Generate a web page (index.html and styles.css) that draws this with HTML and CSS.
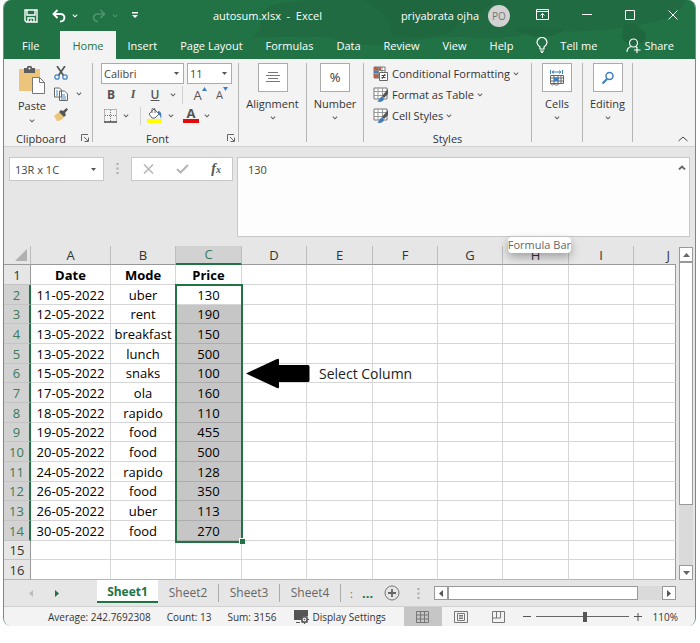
FILE: index.html
```
<!DOCTYPE html>
<html lang="en">

<head>
    <meta charset="UTF-8">
    <meta name="viewport" content="width=device-width, initial-scale=1.0">
    <title>autosum.xlsx - Excel</title>
    <link rel="stylesheet" href="styles.css">
</head>

<body>
    <svg class="defs" aria-hidden="true">
        <symbol id="chev" viewBox="0 0 6 6"><path d="M.8 1.6 3 3.8 5.2 1.6" fill="none" stroke="currentColor" stroke-width="1.1"/></symbol>
        <symbol id="launch" viewBox="0 0 8 8"><path d="M.5 7V.5H7M3 3l4 4M7.500 3.500v4h-4" fill="none" stroke="currentColor"/></symbol>
        <symbol id="dots" viewBox="0 0 3 11"><path d="M.5 0h2v2h-2zM.5 4.500h2v2h-2zM.5 9h2v2h-2z" fill="currentColor"/></symbol>
        <symbol id="brushgrid" viewBox="0 0 16 16">
            <path d="M1 1h13v11H1z" fill="#fff" stroke="#777"/>
            <path d="M1 4.500h13M1 8.500h13M5 1v11M9.500 1v11" stroke="#999" fill="none"/>
            <path d="M15 2v5l-4 4-2-2z" fill="#555"/>
            <path d="M4 14.500c2 0 2-4 5-5l2 2c0 3-4 4-7 3z" fill="#3f7fbf"/>
        </symbol>
    </svg>

    <div class="window">
        <header class="top">
            <svg class="art" viewBox="0 0 440 60" preserveAspectRatio="none" aria-hidden="true">
                <path d="M0 36c14-6 2-24 18-30 20-6 34-6 60-6h352c-4 20-30 22-60 28-40 6-70 2-104 8-36 6-60-2-96 4-30 6-60 8-84 2-10-6-20-4-40-4-20-2-30 2-46-2z" fill="#206b41"/>
                <path d="M110 0h130c-8 14-30 16-40 30-10 8-40 10-60 6-6-10 0-20-30-36zM260 30c20-6 30 4 50-2-10 14-36 10-50 2z" fill="#1f673f"/>
                <path d="M368 32c0-10 14-10 18-2 8 2 6 14-2 14-8 4-20-2-16-12z" fill="#1f673f"/>
            </svg>
            <div class="titlebar">
                <div class="quick">
                    <button aria-label="Save"><svg width="14" height="14" viewBox="0 0 14 14" fill="none" stroke="#fff" stroke-width="1.400"><path d="M1 1h12v12H2.500L1 11.500zM3 1v5h8V1M4 13V9h6v4M7 10.500v2"/></svg></button>
                    <button class="undo" aria-label="Undo"><svg width="14" height="14" viewBox="0 0 14 14" fill="none" stroke="#fff" stroke-width="1.900"><path d="M5.500 1 1.500 5l4 4M2 5h6.500c5.500 0 5 7.500-.5 7.500"/></svg><svg class="chev"><use href="#chev"/></svg></button>
                    <button class="redo" aria-label="Redo" disabled><svg width="14" height="14" viewBox="0 0 14 14" fill="none" stroke="currentColor" stroke-width="1.600"><path d="m8.500 1 4 4-4 4M12 5H5.500C0 5 .5 12.500 6 12.500"/></svg><svg class="chev"><use href="#chev"/></svg></button>
                    <button aria-label="Customize toolbar"><svg width="6" height="7" viewBox="0 0 6 7"><path d="M0 0h6v1.400H0zM0 3h6L3 6z" fill="#fff"/></svg></button>
                </div>
                <h1 class="title">autosum.xlsx&nbsp; -&nbsp; Excel</h1>
                <div class="account">priyabrata ojha <span class="avatar">PO</span></div>
                <div class="controls">
                    <button aria-label="Ribbon display options"><svg width="13" height="11" viewBox="0 0 13 11" fill="none" stroke="#fff"><path d="M.5.500h12v10H.5zM.5 2.500h12M6.500 9V4.500M4.500 6.500l2-2 2 2"/></svg></button>
                    <button aria-label="Minimize"><svg width="10" height="10" viewBox="0 0 10 10" stroke="#fff"><path d="M0 4.500h10"/></svg></button>
                    <button aria-label="Maximize"><svg width="10" height="10" viewBox="0 0 10 10" fill="none" stroke="#fff"><path d="M.5.500h9v9h-9z"/></svg></button>
                    <button aria-label="Close"><svg width="10" height="10" viewBox="0 0 10 10" stroke="#fff"><path d="m.5.500 9 9m0-9-9 9"/></svg></button>
                </div>
            </div>
            <nav class="menu">
                <a class="file" href="#">File</a>
                <a class="active" href="#">Home</a>
                <a href="#">Insert</a>
                <a href="#">Page Layout</a>
                <a href="#">Formulas</a>
                <a href="#">Data</a>
                <a href="#">Review</a>
                <a href="#">View</a>
                <a href="#">Help</a>
                <a class="tell" href="#"><svg width="12" height="16" viewBox="0 0 12 16" fill="none" stroke="#fff" stroke-width="1.200"><path d="M4 12v-2C2 8.500 1 7.500 1 5.500a5 5 0 0 1 10 0C11 7.500 10 8.500 8 10v2zM4 14h4M5 15.400h2"/></svg>Tell me</a>
                <a class="share" href="#"><svg width="15" height="15" viewBox="0 0 15 15" fill="none" stroke="#fff" stroke-width="1.200"><circle cx="7.500" cy="5" r="4"/><path d="M1 14c0-3 2-5 4.500-5.500M9.500 8.500l1.500 1M11 9v6M8 12h6.500"/></svg>Share</a>
            </nav>
        </header>

        <section class="ribbon">
            <div class="group clipboard">
                <div class="body">
                    <button class="paste">
                        <svg width="28" height="28" viewBox="0 0 28 28"><path d="M1 3h21v22H1z" fill="#ecc47c"/><path d="M6 2h3a2.500 2.500 0 0 1 5 0h3v5H6z" fill="#5d5d5d"/><circle cx="11.500" cy="2.500" r="1" fill="#fff"/><path d="M14.500 11.500h7l5 5v11h-12z" fill="#fff" stroke="#777"/><path d="M21.500 11.500v5h5" fill="none" stroke="#777"/></svg>
                        Paste
                        <svg class="chev"><use href="#chev"/></svg>
                    </button>
                    <div class="stack">
                        <button aria-label="Cut"><svg width="14" height="14" viewBox="0 0 14 14" fill="none"><path d="M3 0 9.500 9.500M11 0 4.500 9.500" stroke="#555" stroke-width="1.700"/><circle cx="3" cy="11" r="2.200" stroke="#4a86c5" stroke-width="1.300"/><circle cx="11" cy="11" r="2.200" stroke="#4a86c5" stroke-width="1.300"/></svg></button>
                        <button aria-label="Copy"><svg width="14" height="14" viewBox="0 0 14 14" fill="#fff" stroke="#666"><path d="M.5 1h5l2 2v7h-7zM5.500 4h5l3 3v6.500h-8z"/><path d="M2 4h2M2 6h2M2 8h2M7 8h4M7 10h5M7 12h5" stroke="#4a86c5"/></svg><svg class="chev"><use href="#chev"/></svg></button>
                        <button aria-label="Format Painter"><svg width="14" height="13" viewBox="0 0 14 13"><path d="m0 8 5-4 5 5c-2 3-5 4-7 4z" fill="#ecc47c"/><path d="m5 4 2-2 2 1 3.500-3L14 1.500l-3 3.500 1 2-2 2z" fill="#555"/></svg></button>
                    </div>
                </div>
                <div class="label">Clipboard <svg class="launch"><use href="#launch"/></svg></div>
            </div>

            <div class="group font">
                <div class="body">
                    <div class="line pickers">
                        <select class="face" aria-label="Font"><option>Calibri</option></select>
                        <select class="size" aria-label="Font size"><option>11</option></select>
                    </div>
                    <div class="line">
                        <button class="letter"><b>B</b></button>
                        <button class="letter serif"><i>I</i></button>
                        <button class="letter strong"><u>U</u></button>
                        <button class="drop" aria-label="Underline options"><svg class="chev"><use href="#chev"/></svg></button>
                        <span class="bar"></span>
                        <button class="grow" aria-label="Increase font size">A<svg width="5" height="4" viewBox="0 0 5 4"><path d="M0 4 2.500 0 5 4z" fill="#3f7fbf"/></svg></button>
                        <button class="grow small" aria-label="Decrease font size">A<svg width="5" height="4" viewBox="0 0 5 4"><path d="m0 0 2.500 4L5 0z" fill="#3f7fbf"/></svg></button>
                    </div>
                    <div class="line">
                        <button aria-label="Borders"><svg width="14" height="14" viewBox="0 0 14 14" fill="none" stroke="#777"><path d="M.5.500h12v12M.5.500v12M6.500 1v12M1 6.500h12" stroke-dasharray="1 1"/><path d="M0 13h13" stroke="#444" stroke-width="1.400"/></svg></button>
                        <button class="drop" aria-label="Border options"><svg class="chev"><use href="#chev"/></svg></button>
                        <span class="bar"></span>
                        <button aria-label="Fill color"><svg width="16" height="15" viewBox="0 0 16 15"><path d="m2 6 5-5 5 5-4 4H5z" fill="#fff" stroke="#666"/><path d="M5 5V1.500a1.500 1.500 0 0 1 3 0V5" fill="none" stroke="#666"/><path d="M11 3c3 0 4 3 3 8-1-3-1-4-3-5z" fill="#3f7fbf"/><path d="M0 11h15v4H0z" fill="#ff0"/></svg></button>
                        <button class="drop" aria-label="Fill options"><svg class="chev"><use href="#chev"/></svg></button>
                        <button class="color">A</button>
                        <button class="drop" aria-label="Color options"><svg class="chev"><use href="#chev"/></svg></button>
                    </div>
                </div>
                <div class="label">Font <svg class="launch"><use href="#launch"/></svg></div>
            </div>

            <button class="group big align">
                <span class="tile"><svg width="14" height="12" viewBox="0 0 14 12" stroke="#777"><path d="M2 .5h10M0 3.500h14M2 6.500h10M0 9.500h14"/></svg></span>
                Alignment
                <svg class="chev"><use href="#chev"/></svg>
            </button>
            <button class="group big number">
                <span class="tile percent">%</span>
                Number
                <svg class="chev"><use href="#chev"/></svg>
            </button>

            <div class="group styles">
                <div class="body">
                    <button><svg width="16" height="16" viewBox="0 0 16 16"><path d="M1 1h11v11H1z" fill="#fff" stroke="#777"/><path d="M1 1h7v3H1zM1 8h4v4H1z" fill="#d0583a"/><path d="M1 4.500h5v3H1z" fill="#3f7fbf"/><path d="M5.500 1v11M9 1v5M1 4.500h11M1 8h5" stroke="#888" fill="none"/><path d="M6.500 6.500h8v8h-8z" fill="#fff" stroke="#666"/><path d="M8.500 9.500h4M8.500 11.500h4M12 8l-3 5" stroke="#444"/></svg>Conditional Formatting <svg class="chev"><use href="#chev"/></svg></button>
                    <button><svg width="16" height="16"><use href="#brushgrid"/></svg>Format as Table <svg class="chev"><use href="#chev"/></svg></button>
                    <button><svg width="16" height="16"><use href="#brushgrid"/></svg>Cell Styles <svg class="chev"><use href="#chev"/></svg></button>
                </div>
                <div class="label">Styles</div>
            </div>

            <button class="group big cells">
                <span class="tile"><svg width="16" height="16" viewBox="0 0 16 16" fill="none"><path d="M1.500 0v4M13.500 0v4M3 2h9M5 .5 3 2l2 1.500M10 .5 12 2l-2 1.500" stroke="#3f7fbf"/><path d="M1.500 5.500h13v8h-13zM1.500 8h13M1.500 11h13M5 5v8M9 5v8M12 5v8M2 13.500c0 2 3 2 3 0 0 2 5 2 5 0" stroke="#666"/><path d="M5 7.500h4.500V11H5z" fill="#3f7fbf"/></svg></span>
                Cells
                <svg class="chev"><use href="#chev"/></svg>
            </button>
            <button class="group big editing">
                <span class="tile"><svg width="14" height="14" viewBox="0 0 14 14" fill="none" stroke="#3f7fbf"><circle cx="8.500" cy="5" r="3.500" stroke-width="1.500"/><path d="m6 8-4.500 4.500" stroke-width="2.200"/></svg></span>
                Editing
                <svg class="chev"><use href="#chev"/></svg>
            </button>
            <button class="collapse" aria-label="Collapse ribbon"><svg width="10" height="6" viewBox="0 0 10 6" fill="none" stroke="#444"><path d="m.5 5 4.500-4 4.500 4"/></svg></button>
        </section>

        <section class="formula">
            <select class="namebox" aria-label="Name box"><option>13R x 1C</option></select>
            <svg class="dots" width="3" height="11"><use href="#dots"/></svg>
            <div class="actions">
                <button aria-label="Cancel"><svg width="11" height="10" viewBox="0 0 11 10" stroke="#b5b5b5" stroke-width="1.500"><path d="m1 .5 9 9m0-9-9 9"/></svg></button>
                <button aria-label="Enter"><svg width="13" height="10" viewBox="0 0 13 10" fill="none" stroke="#b5b5b5" stroke-width="2"><path d="m1 5 3.500 3.500L12 1"/></svg></button>
                <button class="fx" aria-label="Insert function">f<small>x</small></button>
            </div>
            <div class="entry">
                <textarea aria-label="Formula Bar">130</textarea>
                <svg class="up" width="8" height="5" viewBox="0 0 8 5" fill="none" stroke="#666" stroke-width="1.800"><path d="m1 4.500 3-3 3 3"/></svg>
                <span class="tooltip" role="tooltip">Formula Bar</span>
            </div>
        </section>

        <main class="sheet">
            <div class="grid">
                <table>
                    <colgroup>
                        <col class="c-num"><col class="c-a"><col class="c-odd"><col class="c-even"><col class="c-odd"><col class="c-even"><col class="c-odd"><col class="c-odd"><col class="c-even"><col class="c-odd"><col>
                    </colgroup>
                    <thead>
                        <tr><th class="corner"><svg width="12" height="12" viewBox="0 0 12 12"><path d="M12 0v12H0z" fill="#b1b1b1"/></svg></th><th>A</th><th>B</th><th class="on">C</th><th>D</th><th>E</th><th>F</th><th>G</th><th>H</th><th>I</th><th class="last">J</th></tr>
                    </thead>
                    <tbody>
                        <tr class="heads"><th>1</th><td>Date</td><td>Mode</td><td>Price</td><td></td><td></td><td></td><td></td><td></td><td></td><td></td></tr>
                        <tr><th class="on">2</th><td>11-05-2022</td><td>uber</td><td class="first">130</td><td></td><td></td><td></td><td></td><td></td><td></td><td></td></tr>
                        <tr><th class="on">3</th><td>12-05-2022</td><td>rent</td><td class="sel">190</td><td></td><td></td><td></td><td></td><td></td><td></td><td></td></tr>
                        <tr><th class="on">4</th><td>13-05-2022</td><td>breakfast</td><td class="sel">150</td><td></td><td></td><td></td><td></td><td></td><td></td><td></td></tr>
                        <tr><th class="on">5</th><td>13-05-2022</td><td>lunch</td><td class="sel">500</td><td></td><td></td><td></td><td></td><td></td><td></td><td></td></tr>
                        <tr><th class="on">6</th><td>15-05-2022</td><td>snaks</td><td class="sel">100</td><td></td><td></td><td></td><td></td><td></td><td></td><td></td></tr>
                        <tr><th class="on">7</th><td>17-05-2022</td><td>ola</td><td class="sel">160</td><td></td><td></td><td></td><td></td><td></td><td></td><td></td></tr>
                        <tr><th class="on">8</th><td>18-05-2022</td><td>rapido</td><td class="sel">110</td><td></td><td></td><td></td><td></td><td></td><td></td><td></td></tr>
                        <tr><th class="on">9</th><td>19-05-2022</td><td>food</td><td class="sel">455</td><td></td><td></td><td></td><td></td><td></td><td></td><td></td></tr>
                        <tr><th class="on">10</th><td>20-05-2022</td><td>food</td><td class="sel">500</td><td></td><td></td><td></td><td></td><td></td><td></td><td></td></tr>
                        <tr><th class="on">11</th><td>24-05-2022</td><td>rapido</td><td class="sel">128</td><td></td><td></td><td></td><td></td><td></td><td></td><td></td></tr>
                        <tr><th class="on">12</th><td>26-05-2022</td><td>food</td><td class="sel">350</td><td></td><td></td><td></td><td></td><td></td><td></td><td></td></tr>
                        <tr><th class="on">13</th><td>26-05-2022</td><td>uber</td><td class="sel">113</td><td></td><td></td><td></td><td></td><td></td><td></td><td></td></tr>
                        <tr><th class="on">14</th><td>30-05-2022</td><td>food</td><td class="sel end">270</td><td></td><td></td><td></td><td></td><td></td><td></td><td></td></tr>
                        <tr><th>15</th><td></td><td></td><td></td><td></td><td></td><td></td><td></td><td></td><td></td><td></td></tr>
                        <tr><th>16</th><td></td><td></td><td></td><td></td><td></td><td></td><td></td><td></td><td></td><td></td></tr>
                    </tbody>
                </table>
                <div class="note">
                    <svg width="65" height="31" viewBox="0 0 65 31"><path d="M1 15.500 32 1q2-1 2 1v5h29q1.500 0 1.500 1.500v14q0 1.500-1.500 1.500H34v5q0 2-2 1z"/></svg>
                    Select Column
                </div>
            </div>
            <div class="vscroll">
                <button aria-label="Scroll up"><svg width="7" height="4" viewBox="0 0 7 4"><path d="M0 4 3.500 0 7 4z" fill="#666"/></svg></button>
                <div class="thumb"></div>
                <button aria-label="Scroll down"><svg width="7" height="4" viewBox="0 0 7 4"><path d="m0 0 3.500 4L7 0z" fill="#666"/></svg></button>
            </div>
        </main>

        <div class="tabs">
            <div class="arrows">
                <button aria-label="Previous sheet"><svg width="4" height="7" viewBox="0 0 4 7"><path d="M4 0v7L0 3.500z" fill="#bbb"/></svg></button>
                <button aria-label="Next sheet"><svg width="4" height="7" viewBox="0 0 4 7"><path d="M0 0v7l4-3.500z" fill="#217346"/></svg></button>
            </div>
            <a class="tab current" href="#">Sheet1</a>
            <a class="tab" href="#">Sheet2</a>
            <a class="tab" href="#">Sheet3</a>
            <a class="tab" href="#">Sheet4</a>
            <span class="cut">:</span>
            <button class="more" aria-label="More sheets">...</button>
            <button class="add" aria-label="New sheet"><svg width="16" height="16" viewBox="0 0 16 16" fill="none" stroke="#777"><circle cx="8" cy="8" r="7"/><path d="M8 4v8M4 8h8" stroke="#666" stroke-width="1.800"/></svg></button>
            <svg class="dots" width="3" height="11"><use href="#dots"/></svg>
            <div class="hscroll">
                <button aria-label="Scroll left"><svg width="4" height="7" viewBox="0 0 4 7"><path d="M4 0v7L0 3.500z" fill="#555"/></svg></button>
                <div class="thumb"></div>
                <button aria-label="Scroll right"><svg width="4" height="7" viewBox="0 0 4 7"><path d="M0 0v7l4-3.500z" fill="#555"/></svg></button>
            </div>
        </div>

        <footer class="status">
            <span>Average: 242.7692308</span>
            <span>Count: 13</span>
            <span>Sum: 3156</span>
            <button class="display"><svg width="15" height="14" viewBox="0 0 15 14"><path d="M0 0h14v6H9l-2 4H0z" fill="#555"/><path d="M2 12.500h4" stroke="#555"/><circle cx="10.500" cy="9.500" r="2.700" fill="#f3f3f3" stroke="#555" stroke-width="1.600"/><path d="M10.500 5v2M10.500 12v2M6.500 9.500h1.500M13 9.500h2M7.500 6.500l1.500 1.500M12 11l1.500 1.500M13.500 6.500 12 8M9 11l-1.500 1.500" stroke="#555" stroke-width="1.200"/><circle cx="10.500" cy="9.500" r=".8" fill="#555"/></svg>Display Settings</button>
            <div class="views">
                <button class="pressed" aria-label="Normal"><svg width="13" height="12" viewBox="0 0 13 12" fill="none" stroke="#777"><path d="M.5.500h12v11H.5zM.5 4h12M.5 8h12M4.500.500v11M8.500.500v11"/></svg></button>
                <button aria-label="Page layout"><svg width="14" height="12" viewBox="0 0 14 12" fill="none" stroke="#777"><path d="M.5.500h13v11H.5zM3.500 2.500h7v7h-7zM5 4.500h4M5 6h4M5 7.500h4"/></svg></button>
                <button aria-label="Page break preview"><svg width="13" height="12" viewBox="0 0 13 12" fill="none" stroke="#777"><path d="M.5.500h12v11H.5zM.5 7h8V.5M4.500.500V7"/></svg></button>
            </div>
            <button class="step" aria-label="Zoom out"><svg width="8" height="8" viewBox="0 0 8 8" stroke="#555"><path d="M0 3.500h8"/></svg></button>
            <input class="zoom" type="range" min="0" max="100" value="53" aria-label="Zoom">
            <button class="step" aria-label="Zoom in"><svg width="8" height="8" viewBox="0 0 8 8" stroke="#555"><path d="M0 3.500h8M4 0v8"/></svg></button>
            <span class="percent">110%</span>
        </footer>
    </div>
</body>

</html>
```
FILE: styles.css
```
*,
*::after {
    box-sizing: border-box;
}

body {
    margin: 0;
    padding: 0 4px 0 3px;
    background-color: #fff;
    color: #333;
    font-family: "Open Sans", "Noto Sans", sans-serif;
    font-size: 11px;
}

button {
    display: flex;
    align-items: center;
    justify-content: center;
    margin: 0;
    padding: 0;
    border: 0;
    background: none;
    color: inherit;
    font: inherit;
}

a {
    color: inherit;
    text-decoration: none;
}

svg {
    display: block;
    flex: none;
}

.defs {
    position: absolute;
    width: 0;
    height: 0;
}

.chev {
    width: 6px;
    height: 6px;
    color: #666;
}

.launch {
    width: 8px;
    height: 8px;
    color: #666;
}

.dots {
    color: #aaa;
}

.window {
    overflow: hidden;
    border: 1px solid #5d9a79;
    border-top: 0;
    border-bottom: 0;
    border-radius: 8px;
    background-color: #e6e6e6;
}

/* title bar and menu */
.top {
    position: relative;
    background-color: #217346;
    color: #fff;
}

.art {
    position: absolute;
    top: 0;
    right: 0;
    width: 64%;
    height: 100%;
}

.titlebar,
.menu {
    position: relative;
    display: flex;
    align-items: center;
}

.titlebar {
    height: 31px;
}

.quick {
    display: flex;
    align-items: center;
    gap: 14px;
    width: 130px;
    padding-left: 20px;
}

.quick .chev {
    margin-left: 6px;
    color: #fff;
}

.quick .redo,
.redo .chev {
    color: #4f9470;
}

.title {
    flex: 1;
    margin: 0;
    font-size: 11px;
    font-weight: normal;
    text-align: center;
}

.account {
    display: flex;
    align-items: center;
    gap: 9px;
}

.avatar {
    width: 22px;
    height: 22px;
    border-radius: 50%;
    background-color: #d2d2d2;
    color: #777;
    font-size: 10px;
    line-height: 22px;
    text-align: center;
}

.controls {
    display: flex;
    gap: 33px;
    padding: 0 17px 2px 26px;
}

.menu {
    height: 28px;
}

.menu a {
    display: flex;
    align-items: center;
    height: 28px;
    padding: 0 12px;
    white-space: nowrap;
}

.menu .file {
    margin: 0 9px 0 6px;
}

.menu .active {
    background-color: #f3f3f3;
    color: #217346;
}

.menu .active ~ a {
    padding: 0 11px 0 12px;
}

.menu .tell {
    gap: 12px;
}

.menu .active ~ .share {
    gap: 3px;
    margin-left: auto;
    padding: 0 21px 0 0;
}

/* ribbon */
.ribbon {
    display: flex;
    height: 88px;
    padding: 4px 0;
    border-bottom: 1px solid #d2d2d2;
    background-color: #f3f3f3;
}

.group {
    display: flex;
    flex-direction: column;
    border-right: 1px solid #b5b5b5;
}

.body {
    flex: 1;
}

.label {
    display: flex;
    align-items: center;
    justify-content: center;
    height: 8px;
}

.label .launch {
    margin-left: auto;
}

.clipboard {
    width: 89px;
}

.clipboard .label {
    padding: 0 3px 0 12px;
}

.clipboard .body {
    display: flex;
    gap: 6px;
    padding: 3px 0 0 14px;
}

.paste {
    flex-direction: column;
    justify-content: flex-start;
    gap: 4px;
    width: 28px;
    line-height: 16px;
}

.stack {
    display: flex;
    flex-direction: column;
    gap: 7px;
    padding-left: 2px;
}

.stack button {
    justify-content: flex-start;
    gap: 8px;
}

.font {
    width: 146px;
}

.font .label {
    padding: 0 3px 0 53px;
}

.font .body {
    padding-left: 8px;
}

.line {
    display: flex;
    align-items: center;
    height: 21px;
    padding-left: 3px;
    color: #555;
}

.pickers {
    gap: 3px;
    padding: 0;
}

select {
    height: 21px;
    padding: 0 2px;
    border: 1px solid #ababab;
    border-radius: 0;
    background: #fff url('data:image/svg+xml,<svg xmlns="http://www.w3.org/2000/svg" width="5" height="3"><path d="M0 0h5L2.500 3z" fill="%23555"/></svg>') no-repeat right 4px center;
    color: #444;
    font: inherit;
    appearance: none;
}

.face {
    width: 83px;
}

.size {
    width: 45px;
}

.letter {
    width: 14px;
    margin-right: 8px;
    font-size: 12px;
}

.strong {
    font-weight: 600;
}

.serif {
    font-family: "Liberation Serif", serif;
    font-weight: bold;
}

.drop {
    width: 16px;
}

.letter + .drop {
    width: 6px;
}

.bar {
    width: 1px;
    height: 18px;
    margin: 0 6px;
    background-color: #d0d0d0;
}

.grow {
    align-items: flex-start;
    width: 22px;
    font-size: 13px;
    line-height: 16px;
}

.grow.small {
    font-size: 11px;
}

.color {
    width: 16px;
    height: 15px;
    border-bottom: 4px solid #e00b0b;
    font-size: 13px;
    font-weight: bold;
    line-height: 11px;
}

.bar + button + .drop + .color {
    margin-left: 4px;
}

.big {
    gap: 4px;
    justify-content: flex-start;
    line-height: 15px;
}

.tile {
    display: flex;
    align-items: center;
    justify-content: center;
    width: 30px;
    height: 29px;
    border: 1px solid #ababab;
    background-color: #fff;
}

.tile.percent {
    font-size: 13px;
}

.align {
    width: 68px;
}

.number {
    width: 57px;
}

.cells {
    width: 51px;
}

.editing {
    width: 50px;
}

.styles {
    width: 168px;
}

.styles .body {
    display: flex;
    flex-direction: column;
    padding-left: 9px;
}

.styles .body button {
    justify-content: flex-start;
    gap: 3px;
    height: 21px;
}

.collapse {
    align-self: flex-end;
    margin: 0 7px 0 auto;
}

/* formula bar */
.formula {
    display: flex;
    align-items: flex-start;
    height: 99px;
    padding: 10px 5px 9px;
}

.namebox {
    width: 95px;
    height: 24px;
    padding-left: 5px;
    border-color: #c8c8c8;
    background-position: right 7px center;
}

.formula .dots {
    margin: 6px 12px;
}

.actions {
    display: flex;
    align-items: center;
    justify-content: space-around;
    width: 102px;
    height: 24px;
    margin-right: 4px;
    border: 1px solid #c8c8c8;
    background-color: #fff;
}

.actions .fx {
    color: #555;
    font: italic bold 14px "Liberation Serif", serif;
}

.fx small {
    font-size: 10px;
}

.entry {
    position: relative;
    flex: 1;
    height: 80px;
}

.entry textarea {
    display: block;
    width: 100%;
    height: 100%;
    padding: 4px 10px;
    border: 1px solid #c8c8c8;
    background-color: #fdfdfd;
    color: #444;
    font: inherit;
    resize: none;
}

.entry .up {
    position: absolute;
    top: 8px;
    right: 4px;
}

.tooltip {
    position: absolute;
    top: 80px;
    right: 119px;
    z-index: 1;
    border-radius: 4px;
    background-color: #fff;
    box-shadow: 0 4px 10px rgba(0, 0, 0, 0.3);
    color: #666;
    line-height: 16px;
    white-space: nowrap;
}

/* sheet */
.sheet {
    display: flex;
    gap: 3px;
    padding-right: 2px;
}

.grid {
    position: relative;
    flex: 1;
}

table {
    width: 100%;
    table-layout: fixed;
    border-collapse: separate;
    border-spacing: 0;
    color: #000;
    font-size: 13px;
    line-height: 18px;
    text-align: center;
}

.c-num {
    width: 27px;
}

.c-a {
    width: 80px;
}

.c-odd {
    width: 65px;
}

.c-even {
    width: 66px;
}

th,
td {
    height: 20px;
    padding: 0;
    border-right: 1px solid #d6d6d6;
    border-bottom: 1px solid #d6d6d6;
    white-space: nowrap;
}

td {
    background-color: #fff;
}

th {
    background-color: #e6e6e6;
    color: #333;
    font-weight: normal;
}

thead th {
    height: 19px;
    border-right-color: #bdbdbd;
    border-bottom-color: #999;
    line-height: 17px;
}

tbody th {
    border-right-color: #999;
    border-bottom-color: #c4c4c4;
}

tbody tr:nth-child(3n) > * {
    height: 19px;
}

tbody tr:last-child > * {
    border-bottom-color: #b5b5b5;
}

td:last-child {
    border-right-color: #999;
}

.corner svg {
    margin-left: 11px;
}

th.last {
    padding-right: 6px;
    border-right: 0;
    text-align: right;
}

.heads td {
    font-weight: bold;
}

th.on {
    background-color: #d2d2d2;
    color: #3c7a59;
}

thead .on {
    border-bottom: 2px solid #217346;
}

tbody .on {
    border-right: 2px solid #217346;
}

td.sel {
    border-bottom-color: #adadad;
    background-color: #c6c6c6;
}

.first,
.end {
    position: relative;
}

/* outline around the selected cells */
.first::after {
    content: "";
    position: absolute;
    top: -1px;
    right: -2px;
    left: -1px;
    z-index: 1;
    height: 259px;
    border: 2px solid #217346;
}

.end::after {
    content: "";
    position: absolute;
    right: -4px;
    bottom: -4px;
    z-index: 2;
    width: 6px;
    height: 6px;
    border: 1px solid #fff;
    border-right: 0;
    border-bottom: 0;
    background-color: #217346;
}

.note {
    position: absolute;
    top: 112px;
    left: 241px;
    display: flex;
    align-items: center;
    gap: 9px;
    color: #222;
    font-size: 14px;
}

.vscroll {
    display: flex;
    flex-direction: column;
    width: 14px;
    margin-top: 1px;
    background-color: #dadada;
}

.vscroll button,
.hscroll button,
.thumb {
    border: 1px solid #999;
    background-color: #fff;
}

.vscroll button {
    height: 15px;
}

.vscroll .thumb {
    flex: 0 0 243px;
}

.vscroll button:last-child {
    margin-top: auto;
}

/* sheet tabs */
.tabs {
    display: flex;
    align-items: center;
    height: 27px;
    padding-right: 19px;
    border-bottom: 1px solid #d0d0d0;
    color: #666;
}

.arrows {
    display: flex;
    gap: 22px;
    width: 93px;
    padding-left: 25px;
}

.tab {
    width: 61px;
    border-right: 1px solid #ababab;
    font-size: 12px;
    line-height: 18px;
    text-align: center;
}

.tab.current {
    align-self: flex-start;
    height: 23px;
    padding-top: 3px;
    border-right: 0;
    border-bottom: 2px solid #217346;
    background-color: #fff;
    color: #217346;
    font-weight: bold;
}

.cut {
    width: 21px;
    color: #a06030;
    text-align: center;
}

.more {
    margin-right: 11px;
    color: #217346;
    font-size: 13px;
    font-weight: bold;
}

.tabs .dots {
    margin: 0 14px 0 17px;
}

.hscroll {
    display: flex;
    flex: 1;
    background-color: #dadada;
}

.hscroll button {
    width: 14px;
    height: 14px;
}

.hscroll .thumb {
    width: 190px;
}

.hscroll button:last-child {
    margin-left: auto;
}

/* status bar */
.status {
    display: flex;
    align-items: center;
    height: 19px;
    padding: 0 17px 0 44px;
    background-color: #f3f3f3;
    font-size: 10px;
    white-space: nowrap;
}

.status > span {
    margin-right: 16px;
}

.display {
    gap: 3px;
    margin-left: 2px;
}

.views {
    display: flex;
    margin-left: auto;
}

.views button {
    width: 38px;
    height: 19px;
}

.views .pressed {
    background-color: #c6c6c6;
}

.step {
    margin-left: 5px;
}

.zoom {
    width: 93px;
    height: 12px;
    margin: 0 0 0 5px;
    background: linear-gradient(#666, #666) center / 100% 1px no-repeat;
    appearance: none;
}

.zoom::-webkit-slider-thumb {
    width: 4px;
    height: 10px;
    background-color: #555;
    appearance: none;
}

.status > .percent {
    margin: 0 0 0 11px;
}
```
